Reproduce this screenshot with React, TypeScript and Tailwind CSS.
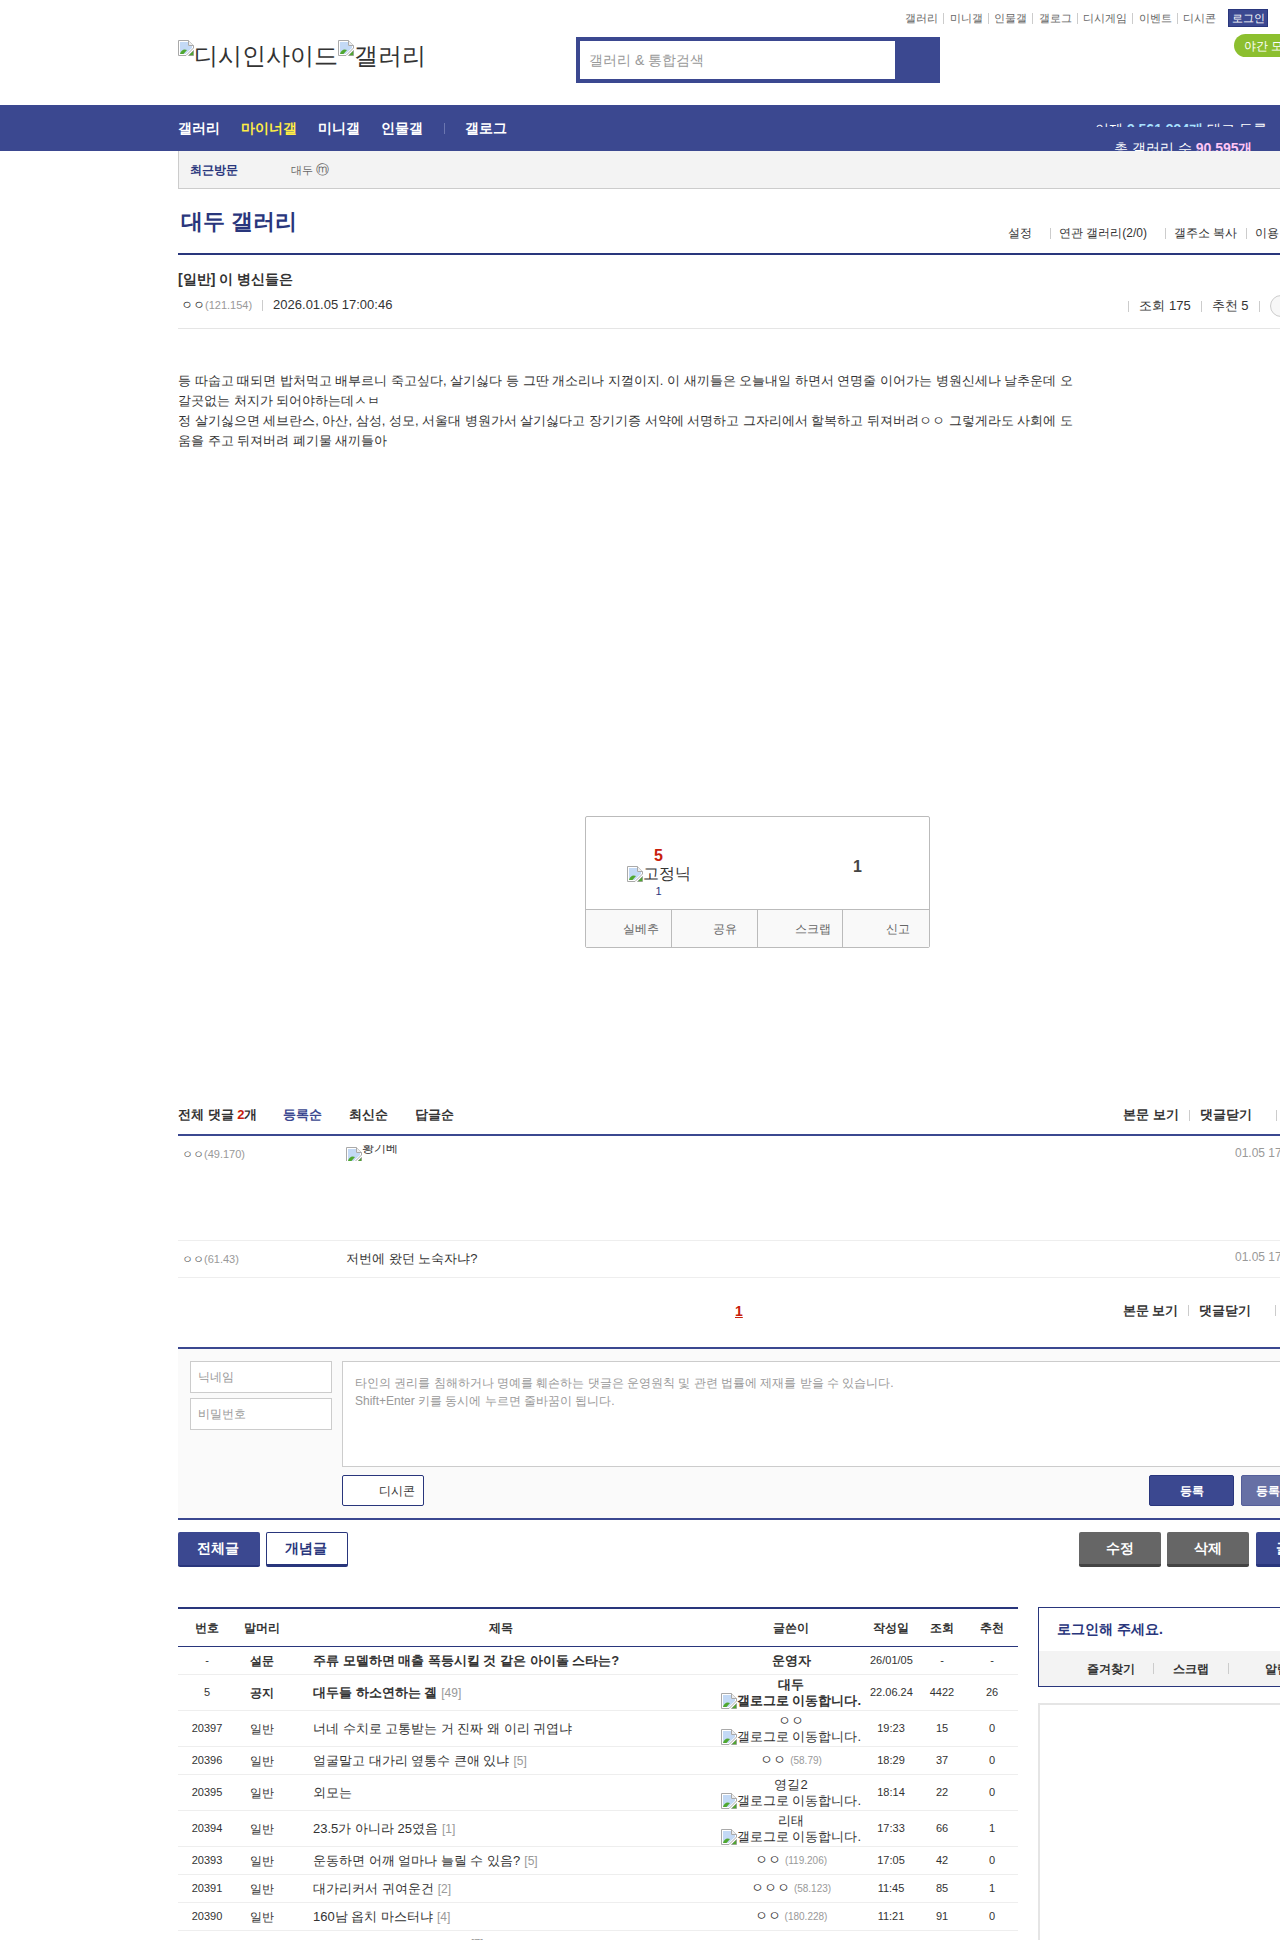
const Broken = ({ className = "" }: { className?: string }) => (
  <svg viewBox="0 0 16 16" className={`inline-block w-4 h-4 shrink-0 ${className}`}>
    <path d="M0.5 0.5H10.5L15.5 5.5V8L8 15.5H0.5Z" fill="#fff" stroke="#a9a9a9" />
    <path d="M2 2H10V6H14V8L7.5 14H2Z" fill="#c3d9f5" />
    <path d="M2 14C3 10 6 8.5 9 10L5.5 14Z" fill="#4fa82f" />
    <path d="M15.5 10.5V15.5H10.5Z" fill="#4fa82f" stroke="#8a8a8a" strokeWidth="0.6" />
    <path d="M10.5 0.5V5.5H15.5" fill="#eee" stroke="#a9a9a9" />
  </svg>
);

const Sep = ({ className = "" }: { className?: string }) => <span className={`inline-block w-px h-[11px] bg-[#ccc] ${className}`} />;

const topLinks = ["갤러리", "미니갤", "인물갤", "갤로그", "디시게임", "이벤트", "디시콘"];

type Row = { no: string; head: string; title: string; cnt?: string; nick: string; ip?: string; gallog?: boolean; date: string; view: string; rec: string; bold?: boolean; h: string };
const rows: Row[] = [
  { no: "-", head: "설문", title: "주류 모델하면 매출 폭등시킬 것 같은 아이돌 스타는?", nick: "운영자", date: "26/01/05", view: "-", rec: "-", bold: true, h: "h-[28px]" },
  { no: "5", head: "공지", title: "대두들 하소연하는 곌", cnt: "[49]", nick: "대두", gallog: true, date: "22.06.24", view: "4422", rec: "26", bold: true, h: "h-[36px]" },
  { no: "20397", head: "일반", title: "너네 수치로 고통받는 거 진짜 왜 이리 귀엽냐", nick: "ㅇㅇ", gallog: true, date: "19:23", view: "15", rec: "0", h: "h-[36px]" },
  { no: "20396", head: "일반", title: "얼굴말고 대가리 옆통수 큰애 있냐", cnt: "[5]", nick: "ㅇㅇ", ip: "(58.79)", date: "18:29", view: "37", rec: "0", h: "h-[28px]" },
  { no: "20395", head: "일반", title: "외모는", nick: "영길2", gallog: true, date: "18:14", view: "22", rec: "0", h: "h-[36px]" },
  { no: "20394", head: "일반", title: "23.5가 아니라 25였음", cnt: "[1]", nick: "리태", gallog: true, date: "17:33", view: "66", rec: "1", h: "h-[36px]" },
  { no: "20393", head: "일반", title: "운동하면 어깨 얼마나 늘릴 수 있음?", cnt: "[5]", nick: "ㅇㅇ", ip: "(119.206)", date: "17:05", view: "42", rec: "0", h: "h-[28px]" },
  { no: "20391", head: "일반", title: "대가리커서 귀여운건", cnt: "[2]", nick: "ㅇㅇㅇ", ip: "(58.123)", date: "11:45", view: "85", rec: "1", h: "h-[28px]" },
  { no: "20390", head: "일반", title: "160남 옵치 마스터냐", cnt: "[4]", nick: "ㅇㅇ", ip: "(180.228)", date: "11:21", view: "91", rec: "0", h: "h-[28px]" },
];

const rowGrid = "grid grid-cols-[58px_52px_424px_158px_42px_60px_40px] items-center";

const voteLabels = [
  { t: "실베추", c: "pr-[12px] border-r border-[#bbb]" },
  { t: "공유", c: "pr-[20px] border-r border-[#bbb]" },
  { t: "스크랩", c: "pr-[11px] border-r border-[#bbb]" },
  { t: "신고", c: "pr-[19px]" },
];

const CommentTools = () => (
  <div className="flex items-center text-[13px] font-bold text-[#333]">
    <span>본문 보기</span>
    <Sep className="ml-[10px] mr-[10px]" />
    <span>댓글닫기</span>
    <Sep className="ml-[24px]" />
  </div>
);

export default function App() {
  return (
    <div className="w-[1280px] h-[1940px] overflow-hidden bg-white text-[#333] font-['Liberation_Sans',sans-serif]">
      <header className="h-[105px] pl-[178px] w-[1280px] flex relative">
        <div className="w-[398px] pt-[40px] flex items-start text-[24px] leading-[32px] text-[#333] shrink-0">
          <Broken />
          <span>디시인사이드</span>
          <Broken />
          <span>갤러리</span>
        </div>
        <div className="mt-[37px] w-[364px] h-[46px] bg-[#3b4890] pl-[4px] py-[4px] pr-[45px] shrink-0">
          <div className="bg-white h-full pl-[9px] flex items-center text-[14px] text-[#999]">갤러리 &amp; 통합검색</div>
        </div>
        <div className="absolute right-[12px] top-[9px] flex items-center text-[11px] text-[#666]">
          {topLinks.map((t, i) => (
            <span key={t} className="flex items-center">
              {i > 0 && <Sep className="ml-[5px] mr-[5.5px] h-[9px]" />}
              {t}
            </span>
          ))}
          <span className="ml-[12px] w-[40px] h-[18px] bg-[#3b4890] border border-[#29367c] text-[#fff] flex items-center justify-center">로그인</span>
        </div>
        <div className="absolute left-[1234px] top-[34px] w-[70px] h-[23px] rounded-l-[12px] bg-[#8cbf2f] text-white text-[12px] pl-[10px] flex items-center whitespace-nowrap">야간 모드</div>
      </header>

      <nav className="h-[46px] bg-[#3b4890] pl-[178px] flex items-center relative overflow-hidden text-[14px] font-bold text-white">
        <span>갤러리</span>
        <span className="ml-[21px] text-[#ffed44]">마이너갤</span>
        <span className="ml-[21px]">미니갤</span>
        <span className="ml-[21px]">인물갤</span>
        <span className="ml-[21px] w-px h-[11px] bg-[#6b76b0]" />
        <span className="ml-[20px]">갤로그</span>
        <div className="absolute left-[1095px] top-[16px] w-[180px] h-[6px] overflow-hidden text-[14px] leading-[16px] text-white whitespace-nowrap font-normal">
          이제 <b className="text-[#a8e0ff]">9,561,994개</b> 태그 등록
        </div>
        <div className="absolute left-[1114px] top-[35px] text-[14px] leading-[16px] text-white whitespace-nowrap font-normal">
          총 갤러리 수 <b className="text-[#ffc5f5]">90,595개</b>
        </div>
      </nav>

      <main className="pl-[178px] w-[1160px] box-content">
        <div className="h-[38px] bg-[#f3f3f3] border-l border-b border-[#ccc] flex items-center text-[12px]">
          <b className="ml-[11px] text-[#29367c] text-[12px]">최근방문</b>
          <span className="ml-[53px] text-[#666] text-[11px]">대두 <span className="text-[13px]">ⓜ</span></span>
        </div>

        <div className="h-[66px] border-b-2 border-[#29367c] flex justify-between pl-[3px]">
          <h1 className="mt-[17px] text-[22px] leading-[32px] font-bold text-[#29367c]">대두 갤러리</h1>
          <div className="mt-[36px] h-[16px] flex items-center text-[12px] text-[#333] whitespace-nowrap pl-[827px] shrink-0 absolute">
            <span>설정</span>
            <Sep className="ml-[18px] mr-[8px]" />
            <span>연관 갤러리(2/0)</span>
            <Sep className="ml-[18px] mr-[8px]" />
            <span>갤주소 복사</span>
            <Sep className="ml-[9px] mr-[8px]" />
            <span>이용 안내</span>
          </div>
        </div>

        <div className="h-[74px] border-b border-[#e5e5e5] pt-[14px]">
          <div className="text-[14px] leading-[20px] font-bold text-[#333]"><span className="font-bold">[일반]</span> 이 병신들은</div>
          <div className="mt-[6px] flex items-center h-[20px] text-[13px]">
            <span className="ml-[3px] text-[12px] text-[#333]">ㅇㅇ</span>
            <span className="text-[11px] text-[#999]">(121.154)</span>
            <Sep className="ml-[10px] mr-[10px]" />
            <span className="text-[13px]">2026.01.05 17:00:46</span>
            <div className="ml-[736px] flex items-center mt-[2px] whitespace-nowrap">
              <Sep className="mr-[10px]" />
              <span>조회 175</span>
              <Sep className="ml-[10px] mr-[10px]" />
              <span>추천 5</span>
              <Sep className="ml-[10px] mr-[10px]" />
              <span className="w-[30px] h-[22px] rounded-[11px] border border-[#ccc] bg-[#f7f7f7]" />
            </div>
          </div>
        </div>

        <div className="mt-[42px] w-[900px] text-[13px] leading-[20px] text-[#333]">
          <p>등 따숩고 때되면 밥처먹고 배부르니 죽고싶다, 살기싫다 등 그딴 개소리나 지껄이지. 이 새끼들은 오늘내일 하면서 연명줄 이어가는 병원신세나 날추운데 오갈곳없는 처지가 되어야하는데ㅅㅂ</p>
          <p>정 살기싫으면 세브란스, 아산, 삼성, 성모, 서울대 병원가서 살기싫다고 장기기증 서약에 서명하고 그자리에서 할복하고 뒤져버려ㅇㅇ 그렇게라도 사회에 도움을 주고 뒤져버려 폐기물 새끼들아</p>
        </div>

        <div className="mt-[365px] ml-[407px] w-[345px] h-[132px] border border-[#bbb] rounded-[2px] flex flex-col">
          <div className="h-[93px] border-b border-[#bbb] flex">
            <div className="w-[145px] flex flex-col items-center pt-[30px]">
              <b className="text-[16px] leading-[18px] text-[#c8200c]">5</b>
              <div className="flex items-center h-[18px] text-[16px] leading-[18px] font-medium text-[#333]"><Broken />고정닉</div>
              <span className="text-[11px] leading-[16px] text-[#29367c]">1</span>
            </div>
            <div className="flex-1 pt-[38px] pl-[122px]"><b className="text-[16px] leading-[18px] text-[#444]">1</b></div>
          </div>
          <div className="flex-1 grid grid-cols-4 bg-[#f9f9f9] text-[12px] text-[#666]">
            {voteLabels.map((l) => (
              <div key={l.t} className={`flex items-center justify-end ${l.c}`}>{l.t}</div>
            ))}
          </div>
        </div>

        <div className="mt-[158px] h-[30px] border-b-2 border-[#3b4890] flex items-start text-[13px] font-bold leading-[18px] whitespace-nowrap">
          <span>전체 댓글 <span className="text-[#c8200c]">2</span>개</span>
          <span className="ml-[26px] text-[#3b4890]">등록순</span>
          <span className="ml-[27px]">최신순</span>
          <span className="ml-[27px]">답글순</span>
          <div className="ml-[669px]"><CommentTools /></div>
        </div>

        <div className="h-[105px] border-b border-[#eee] flex text-[13px] pt-[9px]">
          <div className="w-[168px] pl-[4px] text-[11px] leading-[18px] text-[#999]"><span className="text-[#555]">ㅇㅇ</span>(49.170)</div>
          <div className="w-[889px] h-[16px] overflow-hidden flex"><Broken className="mt-[2px]" /><span className="text-[12px] leading-[6px] text-[#333]">황기베</span></div>
          <span className="text-[12px] leading-[16px] text-[#999] whitespace-nowrap">01.05 17:00:58</span>
        </div>
        <div className="h-[37px] border-b border-[#eee] flex items-center text-[13px]">
          <div className="w-[168px] pl-[4px] text-[11px] text-[#999]"><span className="text-[#555]">ㅇㅇ</span>(61.43)</div>
          <div className="w-[889px] text-[13px]">저번에 왔던 노숙자냐?</div>
          <span className="text-[12px] text-[#999] whitespace-nowrap -mt-[4px]">01.05 17:06:11</span>
        </div>

        <div className="h-[71px] flex items-start pt-[24px] border-b-2 border-[#3b4890]">
          <b className="ml-[557px] text-[14px] leading-[18px] text-[#c8200c] underline">1</b>
          <div className="ml-[380px] -mt-[1px]"><CommentTools /></div>
        </div>

        <div className="h-[171px] bg-[#fafafa] border-b-2 border-[#3b4890] pl-[12px] pt-[12px] flex gap-[10px] text-[12px] text-[#999]">
          <div className="w-[142px] flex flex-col gap-[5px] shrink-0">
            <div className="h-[32px] bg-white border border-[#ccc] pl-[7px] flex items-center">닉네임</div>
            <div className="h-[32px] bg-white border border-[#ccc] pl-[7px] flex items-center">비밀번호</div>
          </div>
          <div className="w-[996px] shrink-0 flex flex-col">
            <div className="h-[106px] bg-white border border-[#ccc] px-[12px] pt-[12px] leading-[18px]">
              <p>타인의 권리를 침해하거나 명예를 훼손하는 댓글은 운영원칙 및 관련 법률에 제재를 받을 수 있습니다.</p>
              <p>Shift+Enter 키를 동시에 누르면 줄바꿈이 됩니다.</p>
            </div>
            <div className="mt-[8px] flex">
              <div className="w-[82px] h-[31px] bg-white border border-[#29367c] rounded-[2px] text-[#333] flex items-center justify-end pr-[8px]">디시콘</div>
              <div className="ml-[725px] w-[85px] h-[31px] bg-[#3b4890] border border-[#29367c] rounded-[2px] font-bold text-white flex items-center justify-center">등록</div>
              <div className="ml-[7px] w-[85px] h-[31px] bg-[#6670a5] border border-[#555f9a] rounded-[2px] font-bold text-white flex items-center justify-center">등록+추천</div>
            </div>
          </div>
        </div>

        <div className="mt-[12px] h-[35px] flex text-[14px] font-bold">
          <div className="w-[82px] bg-[#3b4890] border-b-2 border-[#29367c] rounded-[2px] text-white flex items-center justify-center pr-[2px]">전체글</div>
          <div className="ml-[6px] w-[82px] bg-white border border-[#29367c] border-b-[3px] rounded-[2px] text-[#29367c] flex items-center justify-center pr-[2px]">개념글</div>
          <div className="ml-[731px] w-[82px] bg-[#666] border-b-[3px] border-[#444] rounded-[2px] text-white flex items-center justify-center">수정</div>
          <div className="ml-[6px] w-[82px] bg-[#666] border-b-[3px] border-[#444] rounded-[2px] text-white flex items-center justify-center">삭제</div>
          <div className="ml-[7px] w-[82px] bg-[#3b4890] border-b-[3px] border-[#29367c] rounded-[2px] text-white flex items-center justify-center">글쓰기</div>
        </div>

        <div className="mt-[40px] flex items-start">
          <div className="w-[840px] shrink-0">
            <div className={`${rowGrid} h-[40px] border-t-2 border-b border-t-[#29367c] border-b-[#29367c] text-[12px] font-bold text-[#333] text-center`}>
              <span>번호</span><span>말머리</span><span className="pl-[2px]">제목</span><span>글쓴이</span><span className="whitespace-nowrap">작성일</span><span>조회</span><span>추천</span>
            </div>
            {rows.map((r) => (
              <div key={r.no + r.title} className={`${rowGrid} ${r.h} border-b border-[#eee] text-center text-[11px] text-[#333]`}>
                <span>{r.no}</span>
                <span className={`text-[12px] ${r.bold ? "font-bold" : ""}`}>{r.head}</span>
                <div className={`text-left pl-[25px] text-[13px] whitespace-nowrap ${r.bold ? "font-bold" : ""}`}>
                  {r.title}
                  {r.cnt && <span className="ml-[4px] text-[12px] font-normal text-[#999]">{r.cnt}</span>}
                </div>
                <div className={`flex flex-col items-center text-[13px] leading-[16px] ${r.bold ? "font-bold" : ""}`}>
                  <span className="whitespace-nowrap">
                    {r.nick}
                    {r.ip && <span className="ml-[4px] text-[10px] text-[#999] font-normal">{r.ip}</span>}
                  </span>
                  {r.gallog && <span className="flex items-center text-[13px] leading-[16px] whitespace-nowrap"><Broken />갤로그로 이동합니다.</span>}
                </div>
                <span className="whitespace-nowrap">{r.date}</span>
                <span>{r.view}</span>
                <span>{r.rec}</span>
              </div>
            ))}
            <div className="h-[9px] overflow-hidden pl-[293px] pt-[4px] text-[11px] leading-[16px] text-[#999]">[7]</div>
          </div>
          <aside className="ml-[20px] w-[300px] shrink-0">
            <div className="h-[80px] border border-[#29367c] flex flex-col">
              <div className="h-[43px] pl-[18px] pt-[11px] text-[14px] font-bold text-[#29367c]">로그인해 주세요.</div>
              <div className="flex-1 bg-[#f3f3f3] flex items-center text-[12px] font-bold text-[#333]">
                <span className="ml-[48px]">즐겨찾기</span>
                <Sep className="ml-[18px]" />
                <span className="ml-[19px]">스크랩</span>
                <Sep className="ml-[19px]" />
                <span className="ml-[36px]">알림</span>
              </div>
            </div>
            <div className="mt-[16px] h-[260px] border-2 border-[#e5e5e5] bg-white" />
          </aside>
        </div>
      </main>
    </div>
  );
}
